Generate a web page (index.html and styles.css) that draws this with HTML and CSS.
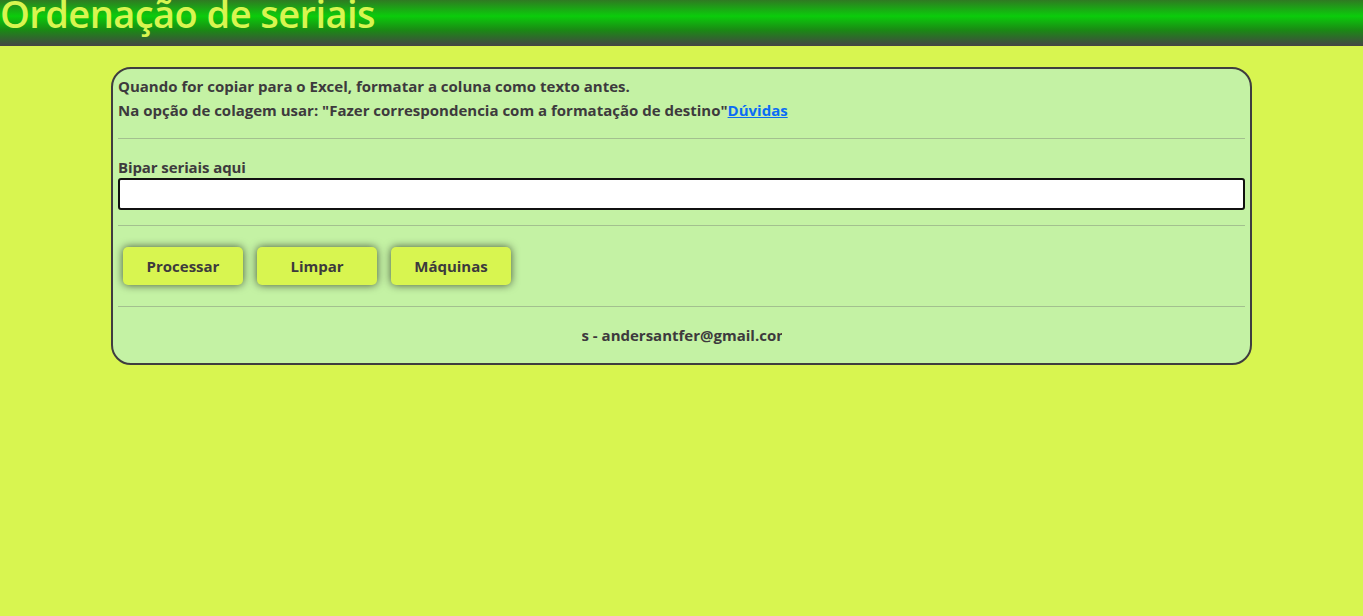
FILE: index.html
```html
<!DOCTYPE html>
<html lang="pt-BR">
<head>
<meta charset="utf-8">
<title>Ordenação de seriais</title>
<link rel="stylesheet" href="styles.css">
</head>
<body>
<header class="topbar">
  <h1 class="title">Ordenação de seriais</h1>
</header>
<main class="card">
  <p class="note">Quando for copiar para o Excel, formatar a coluna como texto antes.</p>
  <p class="note">Na opção de colagem usar: "Fazer correspondencia com a formatação de destino"<a class="link" href="#">Dúvidas</a></p>
  <hr class="sep sep-first">
  <label class="label" for="seriais">Bipar seriais aqui</label>
  <input class="field" id="seriais" type="text" autofocus>
  <hr class="sep sep-second">
  <div class="actions">
    <button class="btn">Processar</button>
    <button class="btn">Limpar</button>
    <button class="btn">Máquinas</button>
  </div>
  <hr class="sep sep-third">
  <div class="footer">
    <div class="ticker"><span class="ticker-text">s - andersantfer@gmail.com</span></div>
  </div>
</main>
</body>
</html>
```

FILE: styles.css
```css
html, body {
  margin: 0;
  padding: 0;
}
body {
  background: #d8f550;
  font-family: "Open Sans", "Noto Sans", sans-serif;
  color: #3d3a3d;
}
.topbar {
  height: 46px;
  background: linear-gradient(to bottom, #2f7a22 0%, #0bcc0b 35%, #1a8a14 65%, #454545 100%);
  overflow: hidden;
}
.title {
  margin: -6px 0 0;
  font-size: 38px;
  line-height: 38px;
  font-weight: 600;
  color: #d8f550;
  letter-spacing: -0.55px;
  white-space: nowrap;
}
.card {
  width: 1127px;
  margin: 21px auto 0;
  padding: 5px 5px 9px;
  background: #c4f2a4;
  border: 2px solid #3f3d3f;
  border-radius: 20px;
}
.note {
  margin: 0;
  font-size: 15px;
  line-height: 24px;
  font-weight: 700;
}
.link {
  color: #0a6cf5;
  text-decoration: underline;
}
.sep {
  border: 0;
  border-top: 1px solid #a3c08f;
  margin: 16px 0 0;
  height: 0;
}
.label {
  display: block;
  margin-top: 18px;
  font-size: 15px;
  line-height: 20px;
  font-weight: 700;
  letter-spacing: -0.1px;
}
.field {
  display: block;
  box-sizing: border-box;
  width: 100%;
  height: 32px;
  margin: 1px 0 0;
  border: 2px solid #111;
  border-radius: 3px;
  background: #fff;
  outline: none;
  font-size: 14px;
  padding: 2px 3px;
}
.sep-second {
  margin-top: 15px;
}
.actions {
  display: flex;
  gap: 14px;
  padding: 21px 5px 21px;
}
.btn {
  width: 120px;
  height: 38px;
  background: #d8f550;
  border: 0;
  border-radius: 5px;
  box-shadow: 0 0 8px rgba(0, 0, 0, 0.65);
  font-family: inherit;
  font-size: 15px;
  font-weight: 700;
  color: #3d3a3d;
}
.sep-third {
  margin-top: 0;
}
.footer {
  display: flex;
  justify-content: center;
  padding: 17px 0 8px;
}
.ticker {
  width: 200px;
  overflow: hidden;
  white-space: nowrap;
  font-size: 15px;
  line-height: 22px;
  font-weight: 700;
}
```
